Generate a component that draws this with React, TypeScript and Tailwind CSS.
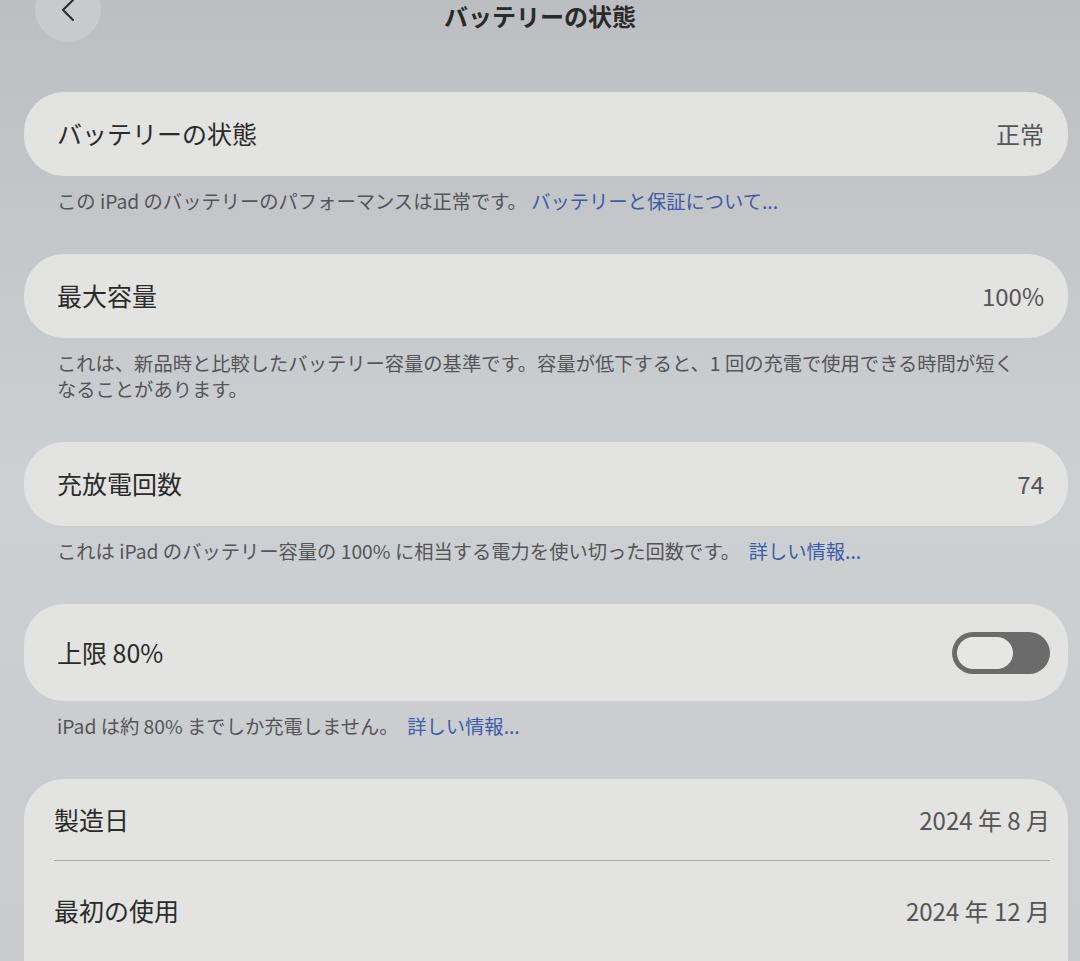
import React from "react";

const font = { fontFamily: '"Noto Sans CJK JP", "Noto Sans", sans-serif' };

function Card({ title, value }: { title: string; value: string }) {
  return (
    <div className="ml-[24px] mr-[12px] flex h-[84px] items-center justify-between rounded-[40px] bg-[#e3e3e1] pl-[33px] pr-[24px]">
      <span className="text-[25px] text-[#2b2b2b]">{title}</span>
      <span className="text-[24px] text-[#555557]">{value}</span>
    </div>
  );
}

function Footer({ children }: { children: React.ReactNode }) {
  return (
    <p className="mb-[40px] mt-[12px] pl-[57px] pr-[40px] text-[19.3px] leading-[26px] text-[#555558]">
      {children}
    </p>
  );
}

function Link({ children }: { children: React.ReactNode }) {
  return <span className="text-[#3c5ca8]">{children}</span>;
}

function Toggle() {
  return (
    <div className="flex h-[42px] w-[98px] items-center rounded-full bg-[#6b6b6b] p-[3px]">
      <div className="h-[36px] w-[60px] rounded-full border-[2px] border-[#6b6b6b] bg-[#e6e6e4]" />
    </div>
  );
}

export default function App() {
  return (
    <div
      style={font}
      className="h-[961px] w-[1080px] overflow-hidden bg-gradient-to-b from-[#bcbec1] via-[#cdd0d3] to-[#c9cbce]"
    >
      <div className="relative h-[92px]">
        <div className="absolute left-[35px] top-[-24px] flex h-[66px] w-[66px] items-end justify-center rounded-full bg-[#c9cacc] pb-[20px]">
          <svg width="16" height="24" viewBox="0 0 16 24" fill="none" stroke="#2a2a2a" strokeWidth="2" strokeLinecap="round" strokeLinejoin="round">
            <path d="M13 2 3 12l10 10" />
          </svg>
        </div>
        <h1 className="pt-[3px] text-center text-[24px] font-bold leading-[26px] text-[#2a2a2a]">バッテリーの状態</h1>
      </div>

      <Card title="バッテリーの状態" value="正常" />
      <Footer>
        この iPad のバッテリーのパフォーマンスは正常です。 <Link>バッテリーと保証について...</Link>
      </Footer>

      <Card title="最大容量" value="100%" />
      <Footer>
        これは、新品時と比較したバッテリー容量の基準です。容量が低下すると、1 回の充電で使用できる時間が短く
        <br />
        なることがあります。
      </Footer>

      <Card title="充放電回数" value="74" />
      <Footer>
        これは iPad のバッテリー容量の 100% に相当する電力を使い切った回数です。&nbsp; <Link>詳しい情報...</Link>
      </Footer>

      <div className="ml-[24px] mr-[12px] flex h-[97px] items-center justify-between rounded-[40px] bg-[#e3e3e1] pl-[33px] pr-[18px]">
        <span className="text-[25px] text-[#2b2b2b]">上限 80%</span>
        <Toggle />
      </div>
      <Footer>
        iPad は約 80% までしか充電しません。&nbsp; <Link>詳しい情報...</Link>
      </Footer>

      <div className="ml-[24px] mr-[12px] rounded-t-[40px] bg-[#e3e3e1] pl-[30px] pr-[18px]">
        <div className="flex h-[82px] items-center justify-between border-b border-[#a9a9a9]">
          <span className="text-[25px] text-[#2b2b2b]">製造日</span>
          <span className="text-[24px] text-[#555557]">2024 年 8 月</span>
        </div>
        <div className="flex h-[100px] items-center justify-between">
          <span className="text-[25px] text-[#2b2b2b]">最初の使用</span>
          <span className="text-[24px] text-[#555557]">2024 年 12 月</span>
        </div>
      </div>
    </div>
  );
}
